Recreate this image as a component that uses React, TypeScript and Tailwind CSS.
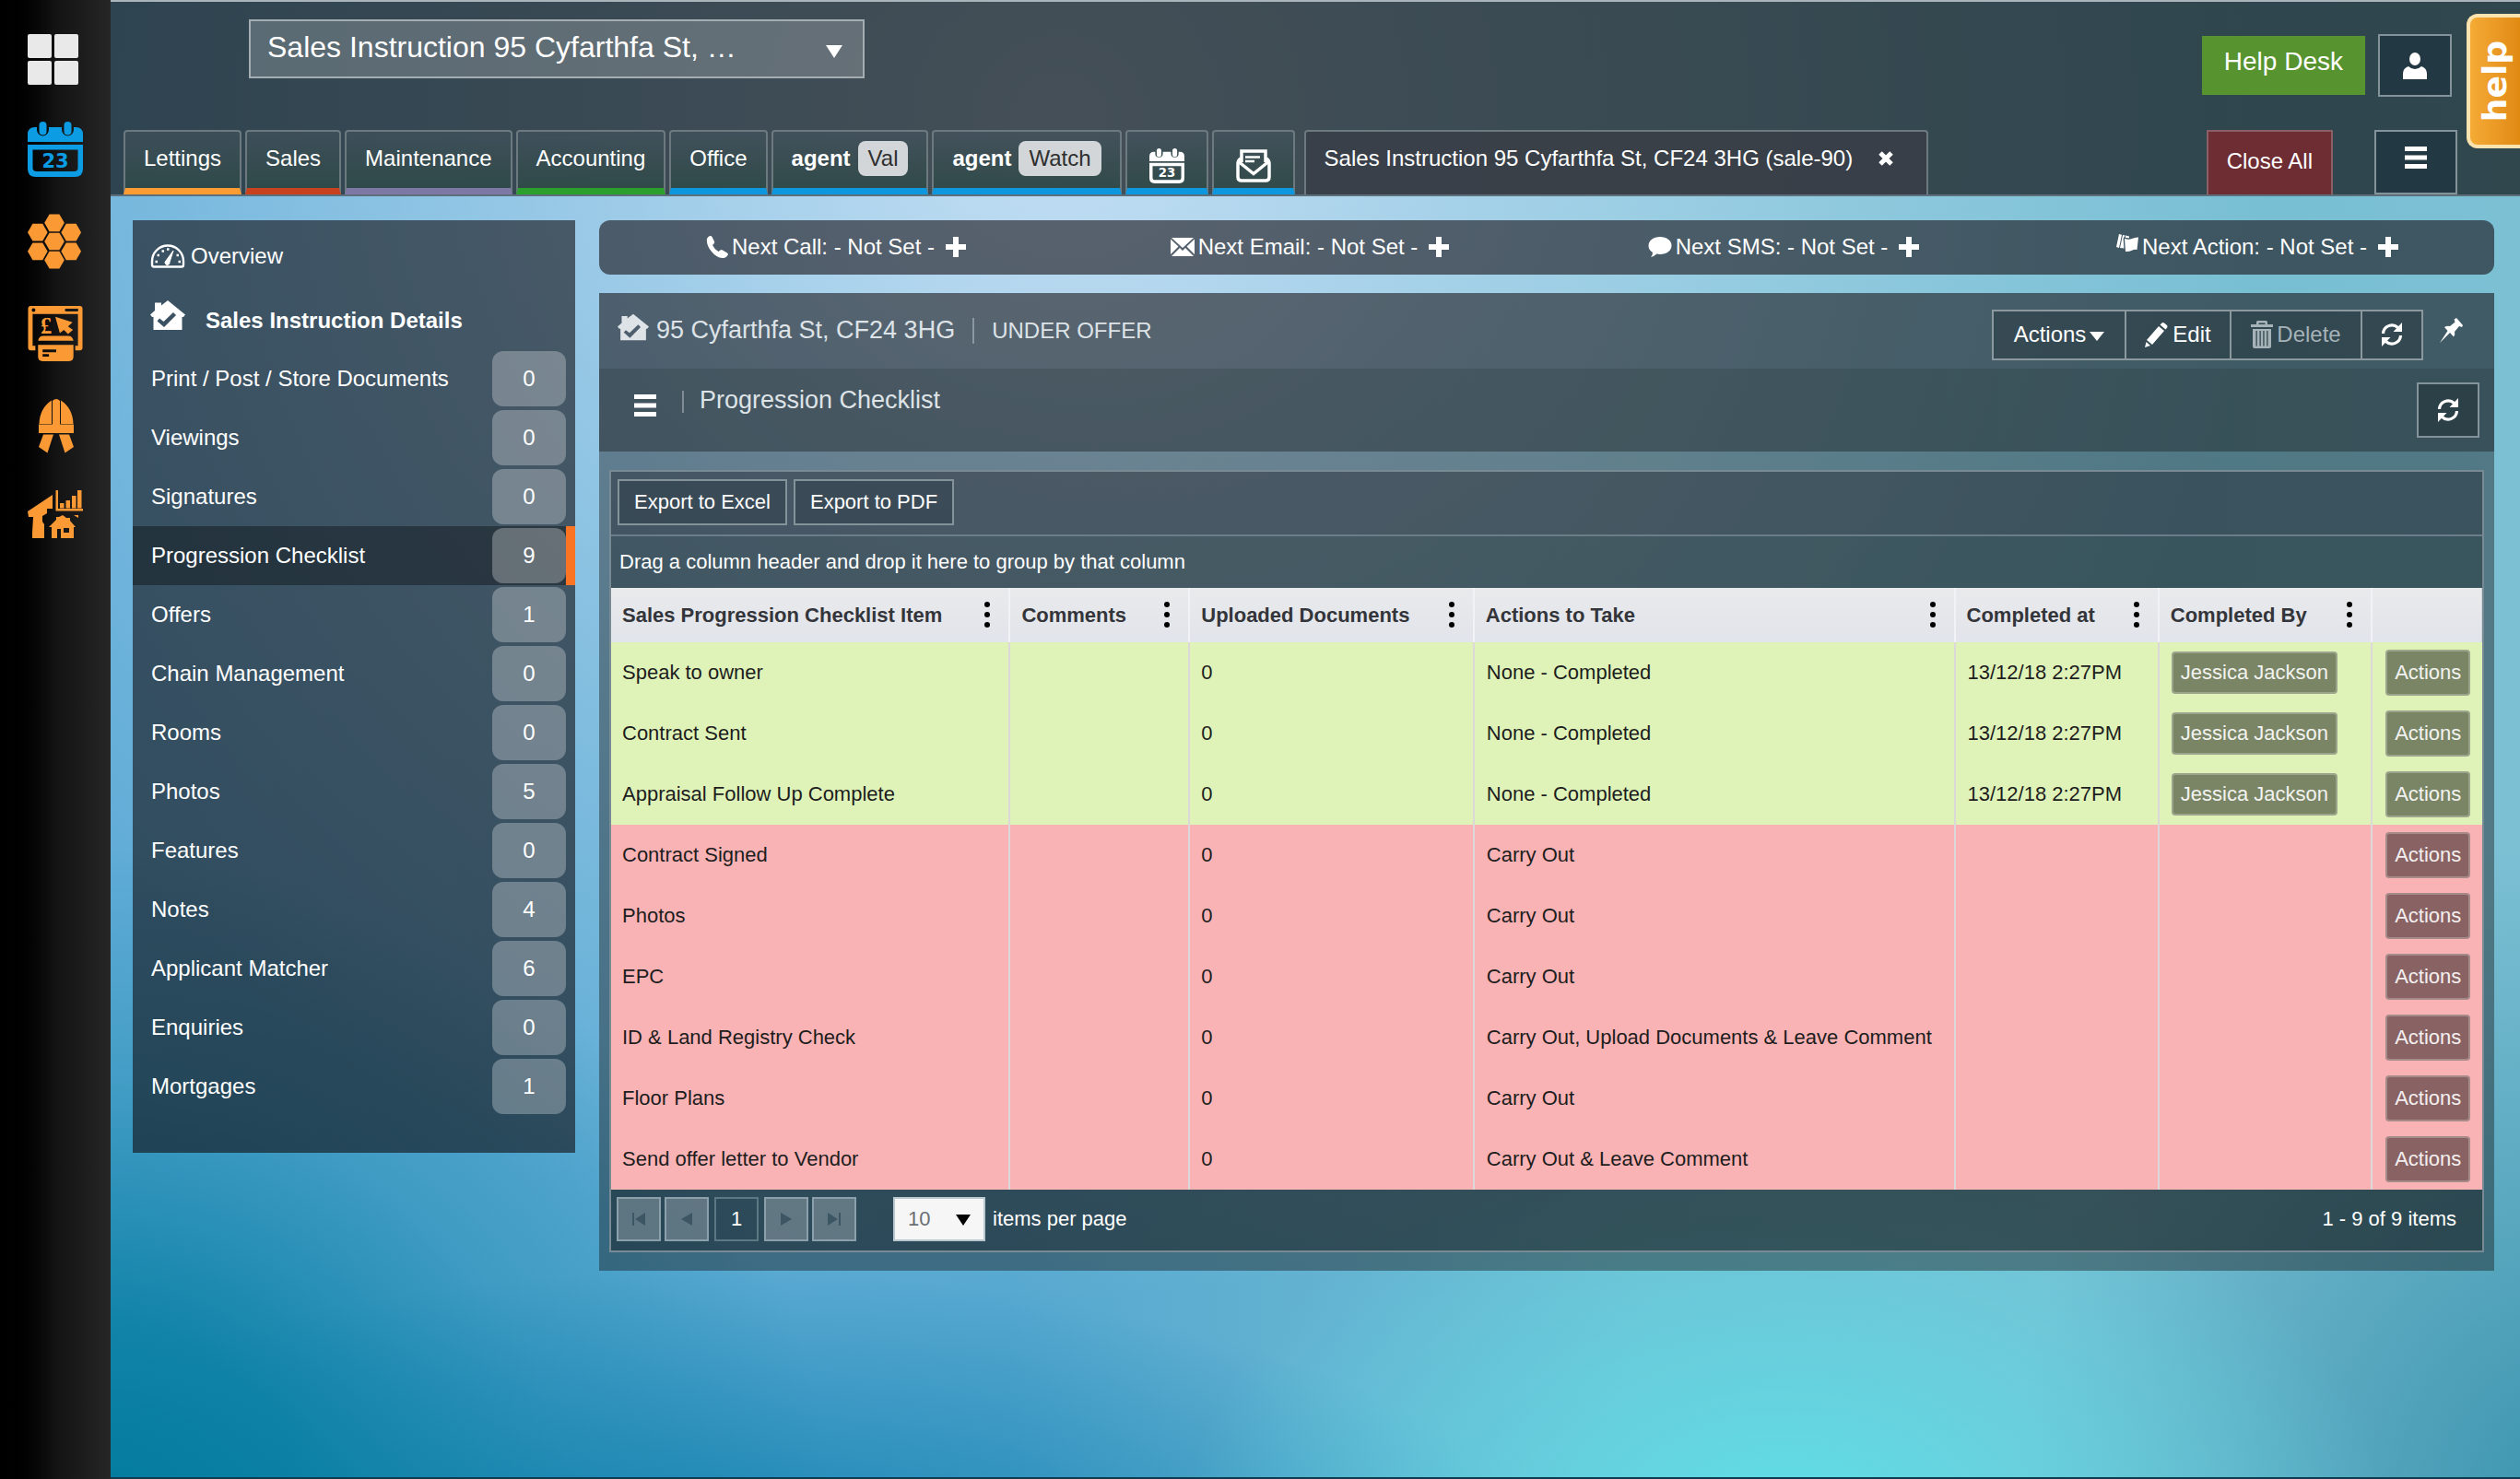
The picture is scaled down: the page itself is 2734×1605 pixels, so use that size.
import type { ReactNode } from "react";
import clsx from "clsx";

const NAV_ITEMS = [
  { label: "Print / Post / Store Documents", count: 0 },
  { label: "Viewings", count: 0 },
  { label: "Signatures", count: 0 },
  { label: "Progression Checklist", count: 9, active: true },
  { label: "Offers", count: 1 },
  { label: "Chain Management", count: 0 },
  { label: "Rooms", count: 0 },
  { label: "Photos", count: 5 },
  { label: "Features", count: 0 },
  { label: "Notes", count: 4 },
  { label: "Applicant Matcher", count: 6 },
  { label: "Enquiries", count: 0 },
  { label: "Mortgages", count: 1 },
];

const TABS = [
  { label: "Lettings", bar: "border-b-[#fb9d33]" },
  { label: "Sales", bar: "border-b-[#c8421f]" },
  { label: "Maintenance", bar: "border-b-[#7d78a4]" },
  { label: "Accounting", bar: "border-b-[#2ba02c]" },
  { label: "Office", bar: "border-b-[#0d97de]" },
];

const COLUMNS = [
  { label: "Sales Progression Checklist Item", width: "w-[21.3%]" },
  { label: "Comments", width: "w-[9.6%]" },
  { label: "Uploaded Documents", width: "w-[15.2%]" },
  { label: "Actions to Take", width: "w-[25.7%]" },
  { label: "Completed at", width: "w-[10.9%]" },
  { label: "Completed By", width: "w-[11.4%]" },
];

interface ChecklistRow {
  item: string;
  action: string;
  completedAt?: string;
  completedBy?: string;
}

const ROWS: ChecklistRow[] = [
  { item: "Speak to owner", action: "None - Completed", completedAt: "13/12/18 2:27PM", completedBy: "Jessica Jackson" },
  { item: "Contract Sent", action: "None - Completed", completedAt: "13/12/18 2:27PM", completedBy: "Jessica Jackson" },
  { item: "Appraisal Follow Up Complete", action: "None - Completed", completedAt: "13/12/18 2:27PM", completedBy: "Jessica Jackson" },
  { item: "Contract Signed", action: "Carry Out" },
  { item: "Photos", action: "Carry Out" },
  { item: "EPC", action: "Carry Out" },
  { item: "ID & Land Registry Check", action: "Carry Out, Upload Documents & Leave Comment" },
  { item: "Floor Plans", action: "Carry Out" },
  { item: "Send offer letter to Vendor", action: "Carry Out & Leave Comment" },
];

/* ---------- icons ---------- */

function CalendarIcon({ className }: { className: string }) {
  return (
    <svg viewBox="0 0 60 60" className={className} fill="currentColor" aria-hidden>
      <path d="M0 22V14q0-8 8-8h2v3a6.5 6.500 0 0 0 13 0V6h14v3a6.500 6.500 0 0 0 13 0V6h2q8 0 8 8v8z" />
      <rect x="12.500" y="0" width="8" height="14.500" rx="4" />
      <rect x="39.500" y="0" width="8" height="14.500" rx="4" />
      <path fillRule="evenodd" d="M0 25h60v26q0 9-9 9H9q-9 0-9-9zM5.500 30.500V50q0 4 4 4h41q4 0 4-4V30.500z" />
      <text x="30" y="49.500" textAnchor="middle" fontSize="21" fontWeight="700" fontFamily="DejaVu Sans, sans-serif">
        23
      </text>
    </svg>
  );
}

function HiveIcon() {
  const cells = [[29, 10], [29, 30.5], [29, 51], [10.5, 20.5], [10.5, 41.5], [47.5, 20.5], [47.5, 41.5]];
  return (
    <svg viewBox="0 0 60 61" className="size-15" fill="currentColor" aria-hidden>
      {cells.map(([x, y]) => (
        <path key={`${x}-${y}`} d="M-11 0L-5.500-9.500H5.500L11 0L5.500 9.500H-5.500z" transform={`translate(${x} ${y})`} />
      ))}
    </svg>
  );
}

function PaymentsIcon() {
  return (
    <svg viewBox="0 0 60 61" className="size-15" fill="currentColor" aria-hidden>
      <path fillRule="evenodd" d="M3 0h54q3 0 3 3v43q0 3-3 3h-5v-5h3V9H5v35h3v5H3q-3 0-3-3V3q0-3 3-3zM6 2.500a2 2 0 1 0 .01 0zM42 3h12a1.500 1.500 0 0 1 0 3H42a1.500 1.500 0 0 1 0-3z" />
      <text x="20" y="30" textAnchor="middle" fontSize="25" fontWeight="700" fontFamily="Liberation Serif, serif">
        £
      </text>
      <path d="M30 12l19 6-5 4.500 5.500 4L44 31l-4.500-4.500L35 30z" />
      <path d="M11 38.500q1-5.500 6-5.500h27q5 0 6 5.500z" />
      <path fillRule="evenodd" d="M11 43h39v13q0 5-5 5H16q-5 0-5-5zM16 48v3h15v-3zM16 53v3h7v-3z" />
    </svg>
  );
}

function ContractorIcon() {
  return (
    <svg viewBox="0 0 60 60" className="size-15" fill="currentColor" aria-hidden>
      <path d="M26 2.500V28H12.500Q13 11 26 2.500zM36 2.500V28h13.500Q49 11 36 2.500zM27 28.500V3q4-4 8 0v25.500h15V38H12v-9.500z" />
      <path d="M17 39.500h11L21.500 59.500 12 53zM45 39.500H34L40.500 59.500 50 53z" />
    </svg>
  );
}

function PortfolioIcon() {
  return (
    <svg viewBox="0 0 60 60" className="size-15" fill="currentColor" aria-hidden>
      <path d="M0 23L27 5v15h-6v5l-5 3v6l2 3v15H5V46l1-17H1z" />
      <path d="M30.500 0H33v20h27v2.500H30.500zM35 14h4.500v5.500H35zM41.500 11H46v8.500h-4.500zM48 6h4.500v13.500H48zM54 0h4.500v19.500H54z" />
      <path fillRule="evenodd" d="M23 40l8-8v-3h3l4-2 4 3h4v3l6 7h-2v12H36V42h-4v10h-6V40zM39 41v5h6v-5z" />
      <path d="M50 27h5v3z" />
    </svg>
  );
}

function MailIcon() {
  return (
    <svg viewBox="0 0 38 36" className="h-9 w-[38px]" fill="none" stroke="currentColor" strokeWidth="3.500" aria-hidden>
      <path d="M6 14V2h26v12" />
      <path d="M10 8.500h16M10 13h10" strokeWidth="2.500" />
      <path d="M5 10q-3 2-3 6v14q0 4 4 4h26q4 0 4-4V16q0-4-3-6" />
      <path d="M3.500 14L19 26.500 34.500 14" />
    </svg>
  );
}

function GaugeIcon() {
  return (
    <svg viewBox="0 0 38 26" className="h-[26px] w-[38px]" fill="none" stroke="currentColor" strokeWidth="2.400" aria-hidden>
      <path d="M2 22.500v-4a17 17 0 0 1 34 0v4q0 2-2 2H4q-2 0-2-2z" />
      <path d="M25 7l-4 12.500a2.500 2.500 0 1 1-4-1.500z" fill="currentColor" strokeWidth="1" />
      <path d="M5.500 19h2.500M7.500 12h2.500M12.500 7.500h2.500M18 5.500h2.500M28.500 12h2.500M30.500 19h2.500" strokeWidth="2.400" />
    </svg>
  );
}

function HouseCheckIcon({ className }: { className: string }) {
  return (
    <svg viewBox="0 0 38 32" className={className} fill="currentColor" aria-hidden>
      <path fillRule="evenodd" d="M0 15.500L5 11V2.500h7v3L19 0l19 15.500-2 2.500h-1.500v14h-31V18H2zM10 19.500l-2.500 3 7.500 6.500L28 16l-3-3-10.500 10z" />
    </svg>
  );
}

function RefreshIcon() {
  return (
    <svg viewBox="0 0 24 26" className="h-[26px] w-6" fill="none" stroke="currentColor" strokeWidth="3.200" aria-hidden>
      <path d="M2.500 12a9.500 9.500 0 0 1 16-6.500M21.500 14a9.500 9.500 0 0 1-16 6.500" />
      <path d="M23 0v10h-9.500zM1 26V16h9.500z" fill="currentColor" stroke="none" />
    </svg>
  );
}

function PlusIcon() {
  return (
    <svg viewBox="0 0 22 22" className="size-[22px]" fill="currentColor" aria-hidden>
      <path d="M8 0h6v8h8v6h-8v8H8v-8H0V8h8z" />
    </svg>
  );
}

function MenuIcon() {
  return (
    <svg viewBox="0 0 24 24" className="size-6" fill="currentColor" aria-hidden>
      <path d="M0 0h24v5H0zM0 9.500h24v5H0zM0 19h24v5H0z" />
    </svg>
  );
}

function DotsIcon() {
  return (
    <svg viewBox="0 0 6 28" className="h-7 w-1.5" fill="currentColor" aria-hidden>
      <circle cx="3" cy="3" r="3" />
      <circle cx="3" cy="14" r="3" />
      <circle cx="3" cy="25" r="3" />
    </svg>
  );
}

function PhoneIcon() {
  return (
    <svg viewBox="0 0 24 24" className="size-6" fill="currentColor" aria-hidden>
      <path d="M1 3q1-2 3-3 1.500-.5 2.500 1L9 6q.5 1.500-.5 2.500L7 10q2 4.500 6.500 7l2-1.500q1-.8 2.500 0l5 3q1.500 1 .5 2.500-1.500 2.500-4 3Q12 24.500 6 17 0 10 1 3z" />
    </svg>
  );
}

function EnvelopeIcon() {
  return (
    <svg viewBox="0 0 26 20" className="h-5 w-[26px]" fill="currentColor" aria-hidden>
      <path d="M1 0h24L13 11zM0 1.500L8.500 9.500 0 18zM26 1.500L17.500 9.500 26 18zM10 11l3 3 3-3 9 9H1z" />
    </svg>
  );
}

function BubbleIcon() {
  return (
    <svg viewBox="0 0 26 22" className="h-[22px] w-[26px]" fill="currentColor" aria-hidden>
      <path d="M13 0c7 0 12.500 4 12.500 9.500S20 19 13 19q-2 0-3.500-.4Q7 21 3 22q2-2 2-5Q.5 14 .5 9.500C.5 4 6 0 13 0z" />
    </svg>
  );
}

function CardsIcon() {
  return (
    <svg viewBox="0 0 24 20" className="mb-2 h-5 w-6" fill="currentColor" aria-hidden>
      <path d="M3 0l3 .8L3 15 0 14zM7 1l2.600.6-2 3.400.8 10.500-4.400-.5zM10 1.500l4 1v1.700l-4-.2zM9 5q5 1.500 8 0t7-1.500l-1.500 13.500q-3-.5-5.500.8T10 19z" />
    </svg>
  );
}

function PencilIcon() {
  return (
    <svg viewBox="0 0 26 28" className="h-7 w-[26px]" fill="currentColor" aria-hidden>
      <path d="M18.500 1.500q1-1 2.500 0L24 4q1 1 .2 2.500L22.500 8.500 16.500 3.500zM15 5l6 5L8 25l-6-5zM1.500 22L6 26 0 28z" />
    </svg>
  );
}

function TrashIcon() {
  return (
    <svg viewBox="0 0 24 30" className="h-[30px] w-6" fill="currentColor" aria-hidden>
      <path fillRule="evenodd" d="M6 4V1.500Q6 0 7.500 0h9Q18 0 18 1.500V4h6v3H0V4zM8.500 4h7V2.500h-7zM2 9h20v19q0 2-2 2H4q-2 0-2-2zM5.500 11v16.500h1.300V11zM9.500 11v16.500h1.300V11zM13.300 11v16.500h1.300V11zM17.200 11v16.500h1.300V11z" />
    </svg>
  );
}

function PinIcon() {
  return (
    <svg viewBox="0 0 26 28" className="h-7 w-[26px]" fill="currentColor" aria-hidden>
      <path d="M18 0l7 8-1 2-3-1-5 6q1 3-1 5.500l-4-4.500L0 27l8.500-13-3.500-4q3-2 6-1l5.500-4.500-1-3z" />
    </svg>
  );
}

function UserIcon() {
  return (
    <svg viewBox="0 0 26 29" className="h-[29px] w-[26px]" fill="currentColor" aria-hidden>
      <ellipse cx="13" cy="7" rx="6" ry="7" />
      <path d="M6 15q3 3 7 3t7-3q6 2 6 8v6H0v-6q0-6 6-8z" />
    </svg>
  );
}

function Triangle({ className }: { className: string }) {
  return (
    <svg viewBox="0 0 16 12" preserveAspectRatio="none" className={className} fill="currentColor" aria-hidden>
      <path d="M0 0h16L8 12z" />
    </svg>
  );
}

/* ---------- page parts ---------- */

function Rail() {
  const links: { label: string; icon: ReactNode; color: string }[] = [
    {
      label: "Dashboard",
      color: "text-[#e9e9e9]",
      icon: (
        <svg viewBox="0 0 60 60" className="size-15" fill="currentColor" aria-hidden>
          <rect x="0" y="5" width="26" height="26" rx="2" />
          <rect x="29" y="5" width="26" height="26" rx="2" />
          <rect x="0" y="34" width="26" height="26" rx="2" />
          <rect x="29" y="34" width="26" height="26" rx="2" />
        </svg>
      ),
    },
    { label: "Diary", color: "text-[#0b9ce4]", icon: <CalendarIcon className="size-15" /> },
    { label: "Hive", color: "text-[#fb9a35]", icon: <HiveIcon /> },
    { label: "Payments", color: "text-[#fb9a35]", icon: <PaymentsIcon /> },
    { label: "Contractors", color: "text-[#fb9a35]", icon: <ContractorIcon /> },
    { label: "Portfolio", color: "text-[#fb9a35]", icon: <PortfolioIcon /> },
  ];
  return (
    <nav aria-label="Modules" className="flex w-30 shrink-0 flex-col gap-10 bg-linear-to-r from-black via-[#131313] to-[#262626] pt-8 pl-[30px]">
      {links.map((link) => (
        <a key={link.label} href="#" aria-label={link.label} className={clsx("block size-15", link.color)}>
          {link.icon}
        </a>
      ))}
    </nav>
  );
}

const tabClass =
  "flex items-center rounded-t-sm border-2 border-b-[7px] border-[#6c7a80] bg-linear-to-b from-[#44545f]/60 to-[#2f4a48]/90 px-5";

function Header() {
  return (
    <header className="border-t-2 border-b-2 border-t-[#a9b4bb] border-b-[#5d6f7a] bg-[#14171b]/72">
      <div className="flex h-[139px] items-start pt-[19px] pr-[74px] pl-[150px]">
        <div className="relative mr-auto">
          <select
            aria-label="Open record"
            className="h-16 w-[668px] appearance-none border-2 border-[#a3adb2] bg-white/20 pr-24 pb-1 pl-[18px] text-[32px] text-white"
          >
            <option>Sales Instruction 95 Cyfarthfa St, …</option>
          </select>
          <Triangle className="pointer-events-none absolute top-7 right-6 h-3.5 w-[18px]" />
        </div>
        <button type="button" className="mt-[18px] h-16 bg-[#57932f] px-6 pb-2 text-[28px]">
          Help Desk
        </button>
        <button type="button" aria-label="Account" className="mt-4 ml-3.5 flex h-[68px] w-20 items-center justify-center border-2 border-[#84939a] bg-[#1d333e]/70">
          <UserIcon />
        </button>
      </div>

      <div className="flex h-[70px] pr-[68px] pl-3.5">
        <div className="flex gap-1">
          {TABS.map((tab) => (
            <button key={tab.label} type="button" className={clsx(tabClass, "pb-[3px]", tab.bar)}>
              {tab.label}
            </button>
          ))}
          {["Val", "Watch"].map((product) => (
            <button key={product} type="button" className={clsx(tabClass, "gap-2 border-b-[#0d97de] pb-[3px] font-bold")}>
              agent
              <span className="rounded-lg bg-[#d2d6d9] px-[11px] py-[3px] font-normal text-[#2f2f2f]">{product}</span>
            </button>
          ))}
          <button type="button" aria-label="Calendar" className={clsx(tabClass, "justify-center border-b-[#0d97de] px-6 pt-3")}>
            <CalendarIcon className="size-[38px]" />
          </button>
          <button type="button" aria-label="Mail" className={clsx(tabClass, "justify-center border-b-[#0d97de] px-6 pt-3")}>
            <MailIcon />
          </button>
        </div>
        <div className="ml-2.5 flex items-center rounded-t-sm border-2 border-b-0 border-[#6c7a80] bg-[#3a3d46]/80 pr-9 pb-2.5 pl-5">
          <span>Sales Instruction 95 Cyfarthfa St, CF24 3HG (sale-90)</span>
          <button type="button" aria-label="Close tab" className="ml-7">
            <svg viewBox="0 0 16 16" className="size-4" stroke="currentColor" strokeWidth="5" aria-hidden>
              <path d="M2 2l12 12M14 2L2 14" />
            </svg>
          </button>
        </div>
        <button type="button" className="mr-[45px] ml-auto border-2 border-b-0 border-[#8a5f66] bg-[#6e2c33] px-5 pb-1">
          Close All
        </button>
        <button type="button" aria-label="Menu" className="flex w-[90px] justify-center border-2 border-[#84939a] bg-[#1d333e]/70 pt-4">
          <MenuIcon />
        </button>
      </div>
    </header>
  );
}

function Sidebar() {
  return (
    <aside className="w-[480px] shrink-0 self-start bg-[#100e11]/60 pb-10">
      <a href="#" className="flex h-[78px] items-center gap-1.5 pl-[19px]">
        <GaugeIcon />
        Overview
      </a>
      <h2 className="flex h-[62px] items-center gap-[22px] pl-[19px] font-bold">
        <HouseCheckIcon className="mb-3 h-8 w-[38px]" />
        Sales Instruction Details
      </h2>
      <ul>
        {NAV_ITEMS.map((item) => (
          <li key={item.label}>
            <a
              href="#"
              aria-current={item.active ? "page" : undefined}
              className={clsx(
                "flex h-16 items-center justify-between border-r-[10px] pl-5",
                item.active ? "border-[#fb7423] bg-black/35" : "border-transparent"
              )}
            >
              {item.label}
              <span className="flex h-[60px] w-20 items-center justify-center rounded-xl bg-white/28">{item.count}</span>
            </a>
          </li>
        ))}
      </ul>
    </aside>
  );
}

function NextBar() {
  const items = [
    { label: "Next Call: - Not Set -", icon: <PhoneIcon /> },
    { label: "Next Email: - Not Set -", icon: <EnvelopeIcon /> },
    { label: "Next SMS: - Not Set -", icon: <BubbleIcon /> },
    { label: "Next Action: - Not Set -", icon: <CardsIcon /> },
  ];
  return (
    <div className="grid h-[59px] grid-cols-4 rounded-xl bg-[#151015]/60 pb-0.5">
      {items.map((item) => (
        <div key={item.label} className="flex items-center justify-center gap-1">
          {item.icon}
          <span>{item.label}</span>
          <button type="button" aria-label={`Set ${item.label.split(":")[0]}`} className="ml-2">
            <PlusIcon />
          </button>
        </div>
      ))}
    </div>
  );
}

const groupButton = "-mr-0.5 flex items-center justify-center gap-1 border-2 border-[#8b999f] bg-black/20";

function RecordHeader() {
  return (
    <>
      <div className="flex h-[82px] items-center bg-[#151015]/28 pr-[33px] pl-5 text-[#dde3e7]">
        <HouseCheckIcon className="mb-2 h-[30px] w-[34px]" />
        <h1 className="ml-2 text-[27px]">95 Cyfarthfa St, CF24 3HG</h1>
        <span className="mx-[19px] h-7 w-0.5 bg-[#8b97a0]" />
        <span>UNDER OFFER</span>
        <div className="mt-2 ml-auto flex h-[55px] text-white">
          <button type="button" className={clsx(groupButton, "w-[146px]")}>
            Actions
            <Triangle className="mt-1 h-2.5 w-4" />
          </button>
          <button type="button" className={clsx(groupButton, "w-[116px]")}>
            <PencilIcon />
            Edit
          </button>
          <button type="button" disabled className={clsx(groupButton, "w-[144px] text-[#a5b2b8]")}>
            <TrashIcon />
            Delete
          </button>
          <button type="button" aria-label="Refresh record" className={clsx(groupButton, "w-[68px]")}>
            <RefreshIcon />
          </button>
        </div>
        <button type="button" aria-label="Pin" className="ml-5 text-white">
          <PinIcon />
        </button>
      </div>
      <div className="flex h-[90px] items-start bg-[#14161a]/40 pr-4 pl-[38px] text-[#dde3e7]">
        <button type="button" aria-label="Section menu" className="mt-7 text-white">
          <MenuIcon />
        </button>
        <span className="mt-6 ml-7 h-6 w-0.5 bg-[#7f8c95]" />
        <h2 className="mt-4 ml-[17px] text-[27px] leading-9">Progression Checklist</h2>
        <button type="button" aria-label="Refresh checklist" className="mt-[15px] ml-auto flex h-[60px] w-[68px] items-center justify-center border-2 border-[#84939a] bg-black/20 text-white">
          <RefreshIcon />
        </button>
      </div>
    </>
  );
}

function ChecklistTable() {
  return (
    <table className="w-full table-fixed border-collapse text-left text-[#1d1d1d]">
      <thead>
        <tr className="h-[59px] bg-linear-to-b from-[#e9eaeb] to-[#e1e4eb] text-[#33353a]">
          {COLUMNS.map((col, i) => (
            <th key={col.label} scope="col" className={clsx("border-[#f1f2f5] pr-5 pl-3", col.width, i > 0 && "border-l-2")}>
              <div className="flex items-center justify-between">
                {col.label}
                <button type="button" aria-label={`${col.label} menu`} className="text-black">
                  <DotsIcon />
                </button>
              </div>
            </th>
          ))}
          <td className="border-l-2 border-[#f1f2f5]" />
        </tr>
      </thead>
      <tbody>
        {ROWS.map((row) => (
          <tr key={row.item} className={clsx("h-[66px]", row.completedAt ? "bg-[#dff3b9]" : "bg-[#fab3b5]")}>
            <td className="pl-3">{row.item}</td>
            <td className="border-l-2 border-[#dcd8da]" />
            <td className="border-l-2 border-[#dcd8da] pl-3">0</td>
            <td className="border-l-2 border-[#dcd8da] pl-[13px]">{row.action}</td>
            <td className="border-l-2 border-[#dcd8da] pl-[13px] whitespace-nowrap">{row.completedAt}</td>
            <td className="border-l-2 border-[#dcd8da] pl-[13px]">
              {row.completedBy && (
                <button type="button" className="h-[46px] rounded-sm border-2 border-white/25 bg-black/45 px-2 whitespace-nowrap text-white/90">
                  {row.completedBy}
                </button>
              )}
            </td>
            <td className="border-l-2 border-[#dcd8da] pl-3.5">
              <button type="button" className="h-[50px] rounded-sm border-2 border-white/25 bg-black/45 px-2 text-white/90">
                Actions
              </button>
            </td>
          </tr>
        ))}
      </tbody>
    </table>
  );
}

const pagerButton = "flex size-12 items-center justify-center border-2 border-[#8ba0aa] bg-white/25 text-[#3c5664]";

function Pager() {
  return (
    <div className="flex h-[66px] items-center gap-1 bg-[#12161a]/40 pr-7 pb-0.5 pl-1.5">
      <button type="button" disabled aria-label="First page" className={pagerButton}>
        <svg viewBox="0 0 14 14" className="size-3.5" fill="currentColor" aria-hidden>
          <path d="M0 0h2v14H0zM14 0v14L3 7z" />
        </svg>
      </button>
      <button type="button" disabled aria-label="Previous page" className={pagerButton}>
        <svg viewBox="0 0 12 14" className="h-3.5 w-3" fill="currentColor" aria-hidden>
          <path d="M12 0v14L0 7z" />
        </svg>
      </button>
      <button type="button" aria-current="page" className="mx-0.5 size-12 border-2 border-[#5d7885]">
        1
      </button>
      <button type="button" disabled aria-label="Next page" className={pagerButton}>
        <svg viewBox="0 0 12 14" className="h-3.5 w-3" fill="currentColor" aria-hidden>
          <path d="M0 0v14l12-7z" />
        </svg>
      </button>
      <button type="button" disabled aria-label="Last page" className={pagerButton}>
        <svg viewBox="0 0 14 14" className="size-3.5" fill="currentColor" aria-hidden>
          <path d="M12 0h2v14h-2zM0 0v14l11-7z" />
        </svg>
      </button>
      <div className="relative ml-9">
        <select id="page-size" className="h-12 w-[100px] appearance-none border-2 border-[#b9c8ce] bg-[#f6f6f7] pl-3.5 text-[#6b6e72]">
          <option>10</option>
        </select>
        <Triangle className="pointer-events-none absolute top-[19px] right-4 h-3 w-4 text-black" />
      </div>
      <label htmlFor="page-size" className="ml-1">
        items per page
      </label>
      <span className="ml-auto">1 - 9 of 9 items</span>
    </div>
  );
}

function ChecklistGrid() {
  const exportButton = "h-[50px] border-2 border-[#84939a] bg-[#32424e]/60 px-4";
  return (
    <div className="mx-[11px] mt-5 border-2 border-[#788a93] text-[22px]">
      <div className="flex items-start gap-[7px] border-b-2 border-[#6b7d88] bg-[#151218]/36 px-[7px] pt-2 pb-2.5">
        <button type="button" className={exportButton}>Export to Excel</button>
        <button type="button" className={exportButton}>Export to PDF</button>
      </div>
      <p className="flex h-14 items-center bg-[#12161a]/36 pl-[9px]">Drag a column header and drop it here to group by that column</p>
      <ChecklistTable />
      <Pager />
    </div>
  );
}

export default function App() {
  return (
    <div className="relative flex min-h-screen bg-[radial-gradient(ellipse_24%_26%_at_71%_103%,#5fdfe6_0%,#5fdfe690_40%,transparent_100%),radial-gradient(ellipse_30%_46%_at_3%_103%,#007a9e_0%,#007a9ed0_30%,#007a9e50_65%,transparent_100%),radial-gradient(ellipse_34%_22%_at_28%_108%,#0f7fae_0%,#0f7fae80_50%,transparent_100%),radial-gradient(ellipse_22%_45%_at_102%_102%,#3c94ae_0%,transparent_100%),radial-gradient(ellipse_48%_80%_at_42%_8%,#c4dff4_0%,transparent_100%),linear-gradient(to_right,#62add8_0%,#56a8d0_40%,#70bcd2_65%,#7cc0d4_100%)] font-['Liberation_Sans',Arial,sans-serif] text-2xl text-white">
      <Rail />
      <div className="flex min-w-0 flex-1 flex-col border-b-2 border-[#0d3c50]">
        <Header />
        <div className="flex gap-[26px] pt-[26px] pr-7 pb-8 pl-6">
          <Sidebar />
          <main className="min-w-0 flex-1">
            <NextBar />
            <section className="mt-5 bg-[#181818]/42 pb-5">
              <RecordHeader />
              <ChecklistGrid />
            </section>
          </main>
        </div>
      </div>
      {/* Help tab docked to the window edge */}
      <button
        type="button"
        className="absolute top-[15px] right-0 flex h-[146px] w-[58px] items-center justify-center rounded-l-xl border-4 border-r-0 border-[#fbe3b0] bg-linear-to-r from-[#f5ab35] to-[#e08a12] font-['DejaVu_Sans',sans-serif] text-4xl font-bold"
      >
        <span className="rotate-180 [writing-mode:vertical-rl]">help</span>
      </button>
    </div>
  );
}
